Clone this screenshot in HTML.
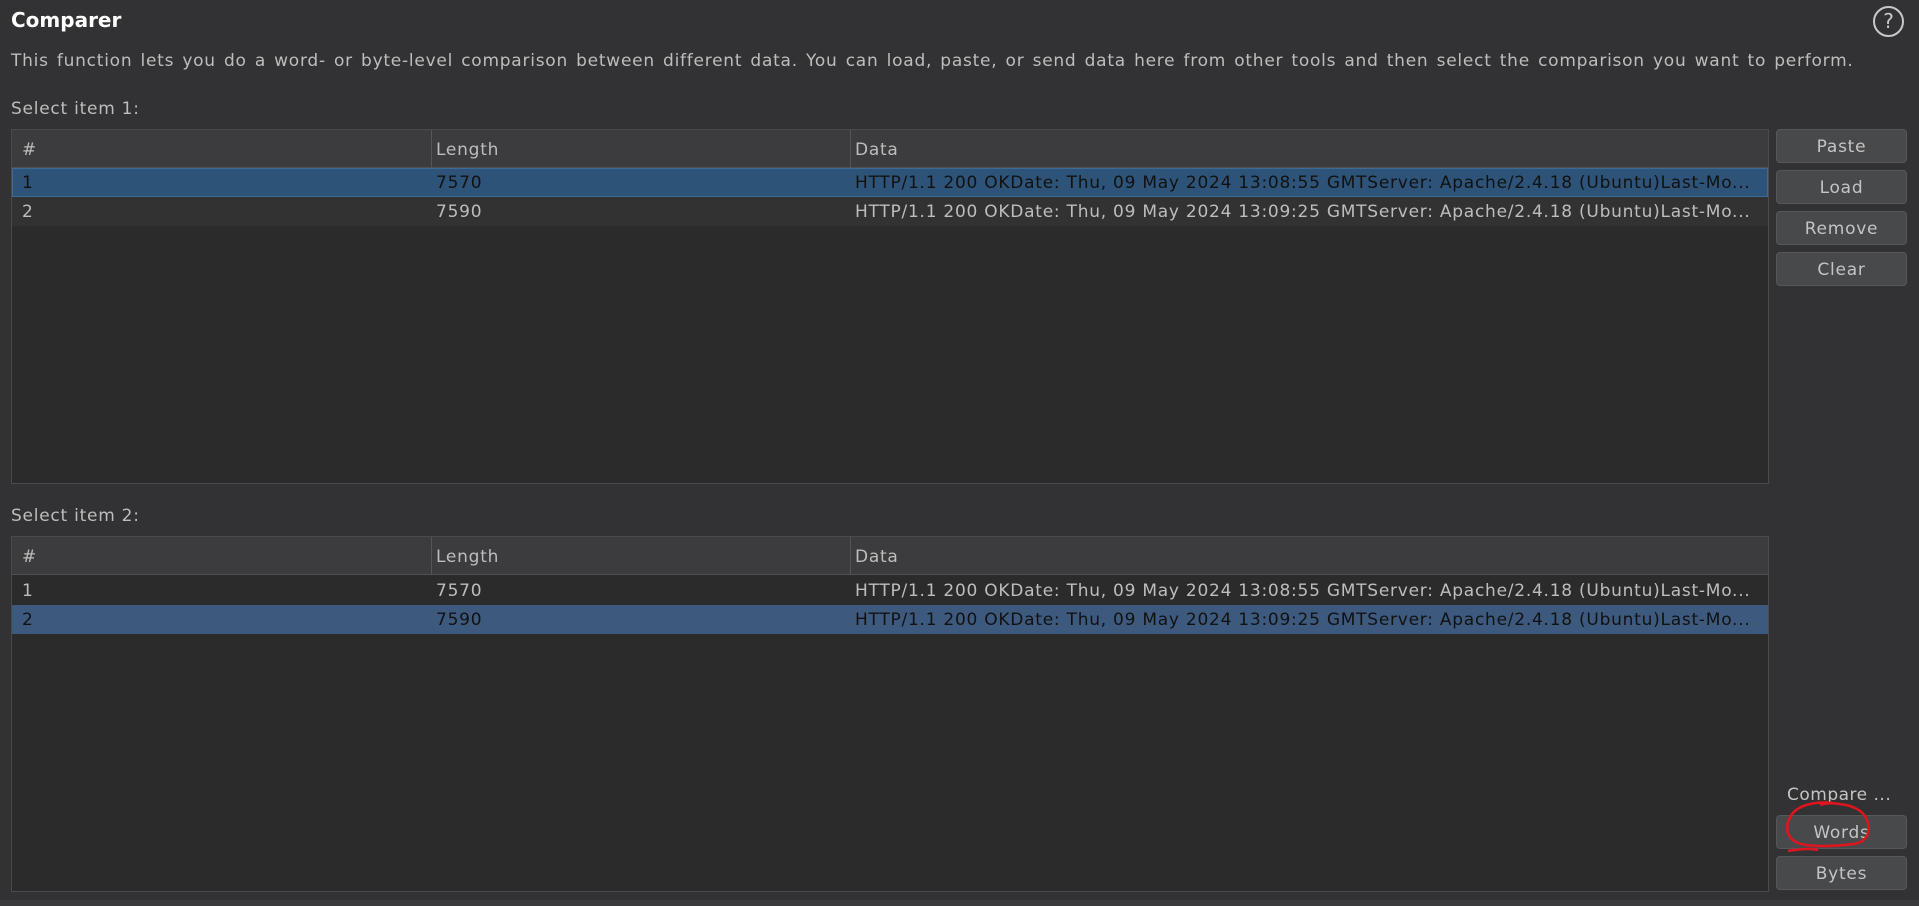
<!DOCTYPE html>
<html><head><meta charset="utf-8"><style>
*{margin:0;padding:0;box-sizing:border-box}
body{width:1919px;height:906px;background:#323234;font-family:"DejaVu Sans","Liberation Sans",sans-serif;color:#bdbdbd;font-size:17px;letter-spacing:0.75px;position:relative;overflow:hidden}
.a{position:absolute;white-space:nowrap}
.tbl{position:absolute;left:11px;width:1758px;background:#2b2b2b;border:1px solid #4a4a4c;overflow:hidden}
.hd{position:absolute;left:0;right:0;top:0;height:38px;background:#3c3c3e;border-bottom:1px solid #505052}
.row{position:absolute;left:0;right:0;height:29px}
.c{position:absolute;top:0;line-height:30px}
.hd .c{line-height:40px}
.div{position:absolute;top:0;height:38px;width:1px;background:#555}
.btn{position:absolute;left:1776px;width:131px;height:34px;background:#48494b;border:1px solid #555759;border-radius:4px;text-align:center;line-height:34px;color:#c4c4c4;font-size:17px}
</style></head><body>
<div class="a" style="left:11px;top:8px;font-size:20px;font-weight:bold;color:#fff;letter-spacing:0">Comparer</div>
<div class="a" style="left:1873px;top:6px;width:31px;height:31px;border:2px solid #c8c8c8;border-radius:50%;text-align:center;line-height:27px;font-size:20px;color:#c8c8c8;letter-spacing:0">?</div>
<div class="a" style="left:11px;top:51px;color:#bdbdbd;word-spacing:2px">This function lets you do a word- or byte-level comparison between different data. You can load, paste, or send data here from other tools and then select the comparison you want to perform.</div>
<div class="a" style="left:11px;top:99px">Select item 1:</div>
<div class="tbl" style="top:129px;height:355px">
 <div class="hd"><div class="c" style="left:10px">#</div><div class="div" style="left:419px"></div><div class="c" style="left:424px">Length</div><div class="div" style="left:838px"></div><div class="c" style="left:843px">Data</div></div>
 <div class="row" style="top:38px;background:#2e5378;border:1px solid #3e6a96"><div class="c" style="left:9px;color:#111;line-height:28px">1</div><div class="c" style="left:423px;color:#111;line-height:28px">7570</div><div class="c" style="left:842px;color:#111;line-height:28px">HTTP/1.1 200 OKDate: Thu, 09 May 2024 13:08:55 GMTServer: Apache/2.4.18 (Ubuntu)Last-Mo...</div></div>
 <div class="row" style="top:67px;background:#323232"><div class="c" style="left:10px">2</div><div class="c" style="left:424px">7590</div><div class="c" style="left:843px">HTTP/1.1 200 OKDate: Thu, 09 May 2024 13:09:25 GMTServer: Apache/2.4.18 (Ubuntu)Last-Mo...</div></div>
</div>
<div class="a" style="left:11px;top:506px">Select item 2:</div>
<div class="tbl" style="top:536px;height:356px">
 <div class="hd"><div class="c" style="left:10px">#</div><div class="div" style="left:419px"></div><div class="c" style="left:424px">Length</div><div class="div" style="left:838px"></div><div class="c" style="left:843px">Data</div></div>
 <div class="row" style="top:39px;background:#2b2b2b"><div class="c" style="left:10px">1</div><div class="c" style="left:424px">7570</div><div class="c" style="left:843px">HTTP/1.1 200 OKDate: Thu, 09 May 2024 13:08:55 GMTServer: Apache/2.4.18 (Ubuntu)Last-Mo...</div></div>
 <div class="row" style="top:68px;background:#3d5a7e"><div class="c" style="left:10px;color:#111">2</div><div class="c" style="left:424px;color:#111">7590</div><div class="c" style="left:843px;color:#111">HTTP/1.1 200 OKDate: Thu, 09 May 2024 13:09:25 GMTServer: Apache/2.4.18 (Ubuntu)Last-Mo...</div></div>
</div>
<div class="btn" style="top:129px">Paste</div>
<div class="btn" style="top:170px">Load</div>
<div class="btn" style="top:211px">Remove</div>
<div class="btn" style="top:252px">Clear</div>
<div class="a" style="left:1787px;top:785px;color:#c4c4c4;letter-spacing:0.5px">Compare ...</div>
<div class="btn" style="top:815px">Words</div>
<div class="btn" style="top:856px">Bytes</div>
<svg class="a" style="left:1780px;top:798px" width="96" height="58" viewBox="0 0 96 58"><path d="M58 6 C40 2 20 6 12 16 C4 28 6 40 18 45 C32 50 56 48 74 46 C86 44 90 36 88 26 C86 14 76 8 60 6 C54 5 46 5 40 7 M8 53 C20 51 30 50 38 52" fill="none" stroke="#e0141c" stroke-width="2.5"/></svg>
<div class="a" style="left:0;top:900px;width:1919px;height:6px;background:#3a3a3c"></div>
</body></html>
